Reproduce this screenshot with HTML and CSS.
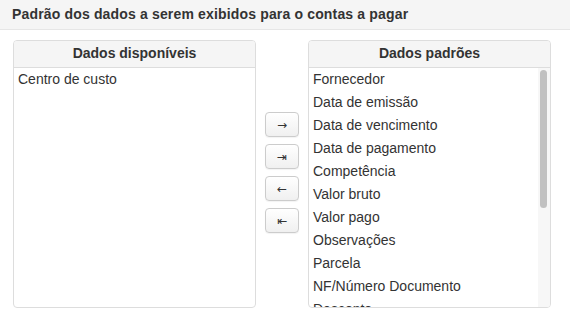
FILE: index.html
```html
<!DOCTYPE html>
<html lang="pt-BR">
<head>
<meta charset="utf-8">
<title>Padrão dos dados</title>
<link rel="stylesheet" href="styles.css">
</head>
<body>
<div class="page-header">Padrão dos dados a serem exibidos para o contas a pagar</div>
<div class="picker">
  <section class="panel">
    <div class="panel-heading">Dados disponíveis</div>
    <div class="panel-body">
      <ul class="panel-list">
        <li>Centro de custo</li>
      </ul>
    </div>
  </section>
  <div class="controls">
    <button class="btn" type="button">&#8594;</button>
    <button class="btn" type="button">&#8677;</button>
    <button class="btn" type="button">&#8592;</button>
    <button class="btn" type="button">&#8676;</button>
  </div>
  <section class="panel">
    <div class="panel-heading">Dados padrões</div>
    <div class="panel-body">
      <ul class="panel-list">
        <li>Fornecedor</li>
        <li>Data de emissão</li>
        <li>Data de vencimento</li>
        <li>Data de pagamento</li>
        <li>Competência</li>
        <li>Valor bruto</li>
        <li>Valor pago</li>
        <li>Observações</li>
        <li>Parcela</li>
        <li>NF/Número Documento</li>
        <li>Desconto</li>
        <li>Juros</li>
        <li>Multa</li>
        <li>Categoria</li>
        <li>Conta bancária</li>
        <li>Forma de pagamento</li>
        <li>Histórico</li>
        <li>Situação</li>
      </ul>
      <div class="scroll-track"><div class="scroll-thumb"></div></div>
    </div>
  </section>
</div>
</body>
</html>
```
FILE: styles.css
```css
* { box-sizing: border-box; }
html, body { margin: 0; padding: 0; background: #fff; }
body {
  font-family: "Liberation Sans", Arial, sans-serif;
  font-size: 14px;
  color: #333;
}
.page-header {
  height: 30px;
  line-height: 29px;
  padding-left: 12px;
  background: #f5f5f5;
  border-bottom: 1px solid #e6e6e6;
  font-weight: bold;
  font-size: 14px;
  letter-spacing: 0.16px;
}
.picker {
  display: flex;
  align-items: center;
  padding: 10px 0 0 13px;
}
.panel {
  width: 243px;
  height: 268px;
  border: 1px solid #ddd;
  border-radius: 4px;
  display: flex;
  flex-direction: column;
  overflow: hidden;
}
.panel-heading {
  height: 27px;
  line-height: 25px;
  text-align: center;
  font-weight: bold;
  background: #f5f5f5;
  border-bottom: 1px solid #ddd;
  flex: none;
}
.panel-body {
  position: relative;
  flex: 1;
  min-height: 0;
  overflow: hidden;
}
.panel-list {
  list-style: none;
  margin: 0;
  padding: 0 0 0 4px;
}
.panel-list li {
  line-height: 23px;
  height: 23px;
  white-space: nowrap;
}
.scroll-track {
  position: absolute;
  top: 0;
  right: 0;
  bottom: 0;
  width: 12px;
  background: #f7f7f7;
}
.scroll-thumb {
  margin: 2px 3px 0 2px;
  height: 138px;
  background: #c1c1c1;
  border-radius: 4px;
}
.controls {
  width: 52px;
  display: flex;
  flex-direction: column;
  align-items: center;
  gap: 7px;
  margin-top: -3px;
}
.btn {
  width: 34px;
  height: 25px;
  padding: 0;
  font-family: "DejaVu Sans", sans-serif;
  font-size: 12px;
  line-height: 1;
  color: #333;
  background: linear-gradient(#ffffff, #f0f0f0);
  border: 1px solid #ccc;
  border-radius: 4px;
  box-shadow: 0 1px 1px rgba(0,0,0,0.05);
}
```
